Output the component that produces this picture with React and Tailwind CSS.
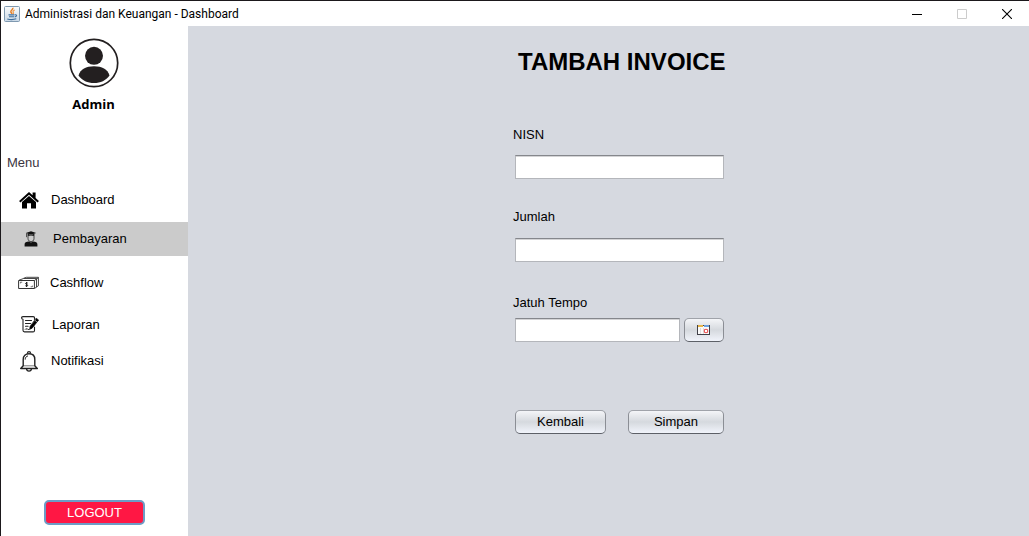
import React from "react";

function JavaIcon() {
  return (
    <svg viewBox="0 0 16 16" className="h-4 w-4 shrink-0" aria-hidden="true">
      <defs>
        <linearGradient id="javaTile" x1="0" y1="0" x2="0" y2="1">
          <stop offset="0" stopColor="#fbfcfd" />
          <stop offset="1" stopColor="#c9d8e6" />
        </linearGradient>
      </defs>
      <rect x="0.5" y="0.5" width="15" height="15" rx="1" fill="url(#javaTile)" stroke="#7f99b0" />
      <path d="M8.800 1.800c.8 1.700-2.800 2.600-1.900 4.300.3.700 1 1.100 1 1.900" fill="none" stroke="#e8822a" strokeWidth="1.500" />
      <path d="M10.700 4c-1.500.8-2.200 1.500-1.400 2.500.4.500.2 1-.2 1.500" fill="none" stroke="#f0953f" strokeWidth="1.100" />
      <path d="M4.500 8.900h6M5 10.800h5M3.300 12.900c2.500.8 6.400.8 9-.1M11 8.900c2.200-.6 2.200 1.600-.3 2" fill="none" stroke="#3d6d9c" strokeWidth="1.100" />
    </svg>
  );
}

function AvatarIcon() {
  return (
    <svg viewBox="0 0 50 50" className="h-[50px] w-[50px]" aria-hidden="true">
      <circle cx="25" cy="25" r="23.700" fill="#fff" stroke="#231f20" strokeWidth="1.700" />
      <circle cx="25" cy="17.800" r="9" fill="#231f20" />
      <path d="M9.500 37.500C11.500 31 17 28.300 25 28.300s13.500 2.700 15.500 9.200C37 42.500 31.500 45 25 45S13 42.500 9.500 37.500Z" fill="#231f20" />
    </svg>
  );
}

function HomeIcon() {
  return (
    <svg viewBox="0 0 20 17" className="h-[17px] w-5" aria-hidden="true">
      <path d="M10 0 13.600 3.200V.6h3v5.300l3.300 3.100-1.300 1.500L10 2.800 1.400 10.500.1 9Z" fill="#000" />
      <path d="M10 3.900 17 10.100V16.500H12V11.200H8V16.500H3V10.100Z" fill="#000" />
    </svg>
  );
}

function StudentIcon() {
  return (
    <svg viewBox="0 0 14 16" className="h-4 w-3.5" aria-hidden="true">
      <path d="M7 .3 12.200 1.900 7 3.700 1.800 1.900Z" fill="#111" />
      <path d="M3.600 2.700V5C5.500 4.200 8.500 4.200 10.400 5V2.700L7 3.900Z" fill="#111" />
      <path d="M2.500 2.200v4" stroke="#333" strokeWidth=".8" />
      <path d="M4 5v2.500C4 9.500 5.500 10.700 7 10.700s3-1.200 3-3.200V5" fill="none" stroke="#333" strokeWidth=".9" />
      <path d="M.6 15.500V13.200c0-1.700 1.800-2.400 4.200-2.700L7 11.600l2.200-1.100c2.400.3 4.200 1 4.200 2.700v2.300Z" fill="#111" />
    </svg>
  );
}

function CashIcon() {
  return (
    <svg viewBox="0 0 21 14" className="h-3.5 w-[21px]" fill="none" stroke="#333" aria-hidden="true">
      <path d="M.6 4.500h15.800v8H.6Z" />
      <path d="M1 4.200 5.500 2.500H18.500v8.700l-2 1.200M5.500 2.300 8.500 1.300H20.400v8.500l-2 1.200M16.400 4.500l4-2.800" strokeWidth=".9" />
      <path d="M2.400 6.200h1.800M12.600 10.800h1.800M2.400 6.200v1.200M14.400 10.800V9.600" strokeWidth=".7" />
      <path d="M9.700 7.100C8.600 6.400 7.300 7 7.700 7.900c.4.800 2 .5 2 1.400 0 .9-1.400 1.100-2.300.4M8.600 6v5" stroke="#111" strokeWidth=".9" />
    </svg>
  );
}

function ReportIcon() {
  return (
    <svg viewBox="0 0 18 18" className="h-[18px] w-[18px]" fill="none" stroke="#222" strokeLinecap="round" strokeLinejoin="round" aria-hidden="true">
      <path d="M13.500 4V2c0-.9-.5-1.400-1.300-1.400H2C1 .6.600 1.100.6 2s.5 1.200 1.400 1.200V14.300c0 1.100.6 1.600 1.500 1.600h8.600c.9 0 1.400-.6 1.400-1.500V11" strokeWidth="1.100" />
      <path d="M4.500 4.500h6M4.500 7.500h5M4.500 10.200h2.600" strokeWidth="1.100" />
      <path d="M4.200 13.400c1-1.500 1.500-1 1.500 0 .7-.7 1-.5 1.300.1h1.200" strokeWidth=".9" />
      <path d="m15.400 2.400 2.200 1.600-6.500 8.200-2.400 1.100.4-2.700Z" fill="#000" stroke="#000" strokeWidth=".7" />
      <path d="m13.900 4.300 2.200 1.700" stroke="#fff" strokeWidth=".6" />
    </svg>
  );
}

function BellIcon() {
  return (
    <svg viewBox="0 0 18 21" className="h-[21px] w-[18px]" fill="none" stroke="#222" strokeLinejoin="round" aria-hidden="true">
      <path d="M7.500 2.700V1.900C7.500.3 10.500.3 10.500 1.900v.8" strokeWidth="1.200" />
      <path d="M3.200 14.800V8.500C3.200 5 5.600 2.800 9 2.800s5.800 2.200 5.800 5.700v6.300L17.300 17.500H.7Z" strokeWidth="1.400" />
      <path d="M5.200 8.600C5.200 6.500 6.200 5.300 8 4.900" />
      <path d="M3.200 14.800H14.800" strokeWidth=".6" />
      <path d="M6.500 17.500C6.800 21 11.200 21 11.500 17.500" strokeWidth="1.300" />
    </svg>
  );
}

function CalendarIcon() {
  return (
    <svg viewBox="0 0 14 12" className="h-3 w-3.5" aria-hidden="true">
      <rect x="0" y="1" width="13" height="10" fill="#404048" />
      <rect x="1" y="2" width="11" height="8" fill="#fafafa" />
      <rect x="1" y="1" width="5" height="2" fill="#e8b548" />
      <rect x="7" y="1" width="5" height="2" fill="#6da2df" />
      <path d="M3.500 4v6M6.500 4v6" stroke="#ddd" />
      <circle cx="9" cy="7" r="1.800" fill="#fff" stroke="#e84a4a" strokeWidth="1.100" />
    </svg>
  );
}

const menu = [
  { label: "Dashboard", icon: HomeIcon, row: "mt-[11px] pl-4" },
  { label: "Pembayaran", icon: StudentIcon, row: "mt-[5px] bg-[#cbcbcb] pl-[18px]", active: true },
  { label: "Cashflow", icon: CashIcon, row: "mt-[10px] pl-[15px]" },
  { label: "Laporan", icon: ReportIcon, row: "mt-2 pl-[17px]" },
  { label: "Notifikasi", icon: BellIcon, row: "mt-[2px] pl-4" },
];

const fieldClass =
  "h-6 min-w-0 border border-[#b4b6bb] border-t-[#85878c] bg-white px-1.5 shadow-[inset_0_1px_0_#d4d4d6] outline-none";
const buttonClass =
  "flex h-6 items-center justify-center rounded-[5px] border border-[#8b8e95] border-t-[#a0a3aa] border-b-[#5d6067] bg-linear-to-b from-[#f4f5f8] via-[#d5d9de] to-[#f1f4fb]";

function Sidebar() {
  return (
    <aside className="flex w-[187px] shrink-0 flex-col bg-white">
      <div className="flex flex-col items-center pt-3 pr-[2px]">
        <AvatarIcon />
        <p className="mt-1.5 font-['Open_Sans','Noto_Sans',sans-serif] text-[13px] leading-5 font-bold">Admin</p>
      </div>
      <nav aria-label="Menu" className="mt-10">
        <p className="pl-1.5 leading-[18px] text-[#3b3540]">Menu</p>
        {menu.map(({ label, icon: Icon, row, active }) => (
          <a
            key={label}
            href="#"
            aria-current={active ? "page" : undefined}
            className={`flex h-[34px] items-center gap-2.5 ${row}`}
          >
            <span className="flex w-6 justify-center">
              <Icon />
            </span>
            {label}
          </a>
        ))}
      </nav>
      <button
        type="button"
        className="mx-auto mt-auto mb-[11px] h-[25px] w-[101px] rounded-[5px] border-2 border-[#6d9cc6] bg-[#ff1744] text-white"
      >
        LOGOUT
      </button>
    </aside>
  );
}

function InvoiceForm() {
  return (
    <main className="flex flex-1 flex-col items-center bg-[#d6d9e0] pt-5 pl-5">
      <form className="w-[211px]" onSubmit={(e) => e.preventDefault()}>
        <h1 className="pl-[5px] text-2xl leading-8 font-bold whitespace-nowrap">TAMBAH INVOICE</h1>
        <div className="mt-[49px] flex flex-col">
          <label htmlFor="nisn" className="leading-4">NISN</label>
          <input id="nisn" type="text" className={`mt-3 ml-0.5 ${fieldClass}`} />
        </div>
        <div className="mt-[30px] flex flex-col">
          <label htmlFor="jumlah" className="leading-4">Jumlah</label>
          <input id="jumlah" type="text" className={`mt-[13px] ml-0.5 ${fieldClass}`} />
        </div>
        <div className="mt-[33px] flex flex-col">
          <label htmlFor="tempo" className="leading-4">Jatuh Tempo</label>
          <div className="mt-[7px] ml-0.5 flex gap-1">
            <input id="tempo" type="text" className={`flex-1 ${fieldClass}`} />
            <button type="button" aria-label="Pilih tanggal" className={`w-10 ${buttonClass}`}>
              <CalendarIcon />
            </button>
          </div>
        </div>
        <div className="mt-[68px] ml-0.5 flex justify-between">
          <button type="button" className={`w-[91px] ${buttonClass}`}>Kembali</button>
          <button type="submit" className={`w-24 ${buttonClass}`}>Simpan</button>
        </div>
      </form>
    </main>
  );
}

export default function App() {
  return (
    <div className="flex min-h-screen flex-col border-t border-l border-[#1b181b] bg-white font-['Liberation_Sans',Arial,sans-serif] text-[13px] text-black">
      <header className="flex h-[25px] items-center bg-white pl-[3px]">
        <JavaIcon />
        <span className="ml-[5px] font-['Roboto','Open_Sans',sans-serif] text-[12px] leading-4">
          Administrasi dan Keuangan - Dashboard
        </span>
        <div className="ml-auto flex h-full">
          <button type="button" aria-label="Minimize" className="flex w-[45px] items-center justify-center">
            <svg viewBox="0 0 10 10" className="h-2.5 w-2.5" aria-hidden="true">
              <path d="M0 5.500h10" stroke="#000" />
            </svg>
          </button>
          <button type="button" aria-label="Maximize" disabled className="flex w-[45px] items-center justify-center">
            <svg viewBox="0 0 10 10" className="h-2.5 w-2.5" aria-hidden="true">
              <path d="M.5.500h9v9h-9Z" fill="none" stroke="#ccc" />
            </svg>
          </button>
          <button type="button" aria-label="Close" className="flex w-[45px] items-center justify-center">
            <svg viewBox="0 0 10 10" className="h-2.5 w-2.5" aria-hidden="true">
              <path d="m0 0 10 10M10 0 0 10" stroke="#000" strokeWidth="1.100" />
            </svg>
          </button>
        </div>
      </header>
      <div className="flex flex-1">
        <Sidebar />
        <InvoiceForm />
      </div>
    </div>
  );
}
